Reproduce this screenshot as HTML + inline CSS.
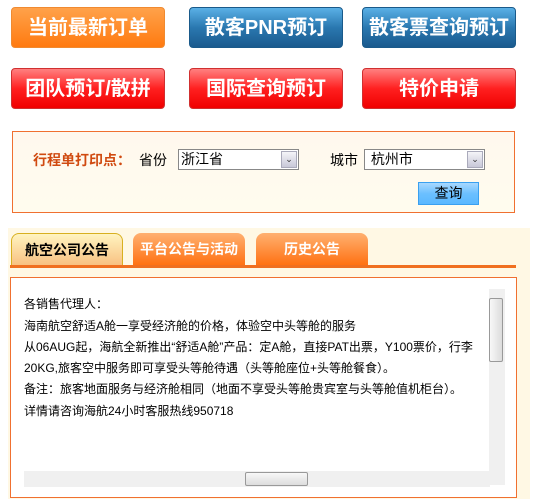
<!DOCTYPE html>
<html><head><meta charset="utf-8"><style>
*{margin:0;padding:0;box-sizing:border-box}
body{width:534px;height:499px;background:#fff;position:relative;font-family:"Liberation Sans","Noto Sans CJK SC",sans-serif;overflow:hidden}
.b{position:absolute;width:154px;height:41px;border-radius:4px;color:#fff;font-weight:bold;font-size:20px;text-align:center;line-height:41px;letter-spacing:0px}
.o{background:linear-gradient(#ffa24a,#ff7a10);border:1px solid #f08a30}
.bl{background:linear-gradient(#5ab0e6,#2a78b0 50%,#1a5a8e);border:1px solid #1a5a8a}
.r{background:linear-gradient(#ff8080,#ff2020 50%,#f00000);border:1px solid #d03030}
.abs{position:absolute}
.sel{position:absolute;height:21px;border:1px solid #888;background:#fff;font-size:14px;line-height:19px;padding-left:2px}
.sel i{position:absolute;right:1px;top:1px;width:16px;height:17px;background:linear-gradient(#f4f4f8,#c8c8d8);border:1px solid #aab;font-style:normal;font-size:9px;text-align:center;line-height:15px;color:#333}
.tab{position:absolute;top:233px;width:112px;height:33px;border-radius:8px 8px 0 0;text-align:center;line-height:33px;font-weight:bold;font-size:14px}
.t{font-size:12px;color:#000;position:absolute;left:24px;white-space:nowrap}
</style></head><body>
<div class="b o" style="left:11px;top:7px">当前最新订单</div>
<div class="b bl" style="left:189px;top:7px">散客PNR预订</div>
<div class="b bl" style="left:362px;top:7px">散客票查询预订</div>
<div class="b r" style="left:11px;top:68px">团队预订/散拼</div>
<div class="b r" style="left:189px;top:68px">国际查询预订</div>
<div class="b r" style="left:362px;top:68px">特价申请</div>

<div class="abs" style="left:12px;top:131px;width:503px;height:82px;border:1px solid #f07030;background:linear-gradient(#fff8ee,#fffcee)"></div>
<div class="abs" style="left:33px;top:150px;font-size:14px;font-weight:bold;color:#d04a10">行程单打印点：</div>
<div class="abs" style="left:139px;top:150px;font-size:14px">省份</div>
<div class="sel" style="left:178px;top:149px;width:121px">浙江省<i>⌄</i></div>
<div class="abs" style="left:330px;top:150px;font-size:14px">城市</div>
<div class="sel" style="left:364px;top:149px;width:121px">&nbsp;杭州市<i>⌄</i></div>
<div class="abs" style="left:418px;top:182px;width:61px;height:23px;border:1px solid #3aa0f0;background:linear-gradient(#a8d8ff,#6cc0ff 50%,#5ab8ff);font-size:14px;text-align:center;line-height:21px">查询</div>

<div class="abs" style="left:8px;top:228px;width:522px;height:271px;background:#fff8e4"></div>
<div class="tab" style="left:11px;background:linear-gradient(#fff4c0,#f8c080);border:1px solid #d8b020;border-bottom:none;color:#000">航空公司公告</div>
<div class="tab" style="left:133px;background:linear-gradient(#ffb070,#ff7010);color:#fff">平台公告与活动</div>
<div class="tab" style="left:256px;background:linear-gradient(#ffb070,#ff7010);color:#fff">历史公告</div>
<div class="abs" style="left:10px;top:265px;width:506px;height:3px;background:#f07020"></div>
<div class="abs" style="left:10px;top:277px;width:507px;height:221px;border:1px solid #f07030;background:#fff"></div>
<div class="t" style="top:295px">各销售代理人：</div>
<div class="t" style="top:317px">海南航空舒适A舱一享受经济舱的价格，体验空中头等舱的服务</div>
<div class="t" style="top:338px">从06AUG起，海航全新推出“舒适A舱”产品：定A舱，直接PAT出票，Y100票价，行李</div>
<div class="t" style="top:359px">20KG,旅客空中服务即可享受头等舱待遇（头等舱座位+头等舱餐食）。</div>
<div class="t" style="top:380px">备注：旅客地面服务与经济舱相同（地面不享受头等舱贵宾室与头等舱值机柜台）。</div>
<div class="t" style="top:402px">详情请咨询海航24小时客服热线950718</div>
<div class="abs" style="left:489px;top:289px;width:16px;height:196px;background:#f0f0f0"></div>
<div class="abs" style="left:489px;top:298px;width:14px;height:64px;border:1px solid #999;border-radius:2px;background:linear-gradient(90deg,#f8f8f8,#dcdcdc)"></div>
<div class="abs" style="left:24px;top:471px;width:466px;height:16px;background:#f0f0f0"></div>
<div class="abs" style="left:245px;top:472px;width:63px;height:14px;border:1px solid #999;border-radius:2px;background:linear-gradient(#f8f8f8,#dcdcdc)"></div>
</body></html>
